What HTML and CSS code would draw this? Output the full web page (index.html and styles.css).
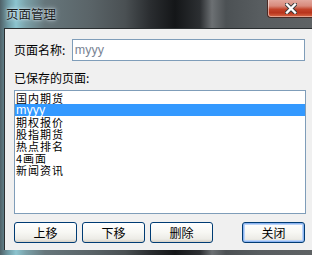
FILE: index.html
```html
<!DOCTYPE html>
<html>
<head>
<meta charset="utf-8">
<link rel="stylesheet" href="styles.css">
</head>
<body>
<div class="window">
  <div class="titlebar">
    <div class="title">页面管理</div>
    <div class="close">
      <svg width="12" height="11" viewBox="0 0 12 11">
        <path d="M2 1.5 L10 9.5 M10 1.5 L2 9.5" stroke="#3a3a3a" stroke-width="4.2" stroke-linecap="square" fill="none"/>
        <path d="M2 1.5 L10 9.5 M10 1.5 L2 9.5" stroke="#ffffff" stroke-width="2.4" stroke-linecap="square" fill="none"/>
      </svg>
    </div>
  </div>
  <div class="client">
    <div class="name-row">
      <span class="label">页面名称:</span>
      <div class="input">myyy</div>
    </div>
    <div class="label saved">已保存的页面:</div>
    <div class="listbox">
      <div class="item">国内期货</div>
      <div class="item selected">myyy</div>
      <div class="item">期权报价</div>
      <div class="item">股指期货</div>
      <div class="item">热点排名</div>
      <div class="item">4画面</div>
      <div class="item">新闻资讯</div>
    </div>
    <div class="buttons">
      <div class="btn">上移</div>
      <div class="btn">下移</div>
      <div class="btn">删除</div>
      <div class="btn default">关闭</div>
    </div>
  </div>
</div>
</body>
</html>
```
FILE: styles.css
```css
html, body {
  margin: 0;
  padding: 0;
}
body {
  width: 312px;
  height: 255px;
  overflow: hidden;
  font-family: "Noto Sans CJK SC", "Liberation Sans", sans-serif;
  font-size: 12px;
  color: #000;
}
.window {
  width: 312px;
  height: 255px;
  background:
    linear-gradient(to right,
      #4f6168 0px, #6f9aa4 8px, #8cc4cf 16px, #7aa0a8 26px, #66767b 45px,
      #5a6468 90px, #4a5053 125px, #2a2d30 150px, #141618 175px,
      #2c2f32 200px, #6c7073 212px, #4c5154 226px, #585d60 260px, #5e6264 312px);
  display: flex;
  flex-direction: column;
}
.titlebar {
  height: 28px;
  display: flex;
  align-items: flex-start;
}
.title {
  padding: 7px 0 0 6px;
  line-height: 14px;
  font-size: 12.5px;
  color: #1a1a1a;
  text-shadow: 0 0 5px rgba(230, 245, 255, 0.9), 0 0 2px rgba(230, 245, 255, 0.8);
}
.close {
  margin-left: auto;
  width: 44px;
  height: 17px;
  border: 1px solid #4a2a24;
  border-top: none;
  border-right: none;
  border-radius: 0 0 0 4px;
  box-shadow: inset 1px 0 0 rgba(255,255,255,0.5), inset 0 -1px 0 rgba(255,255,255,0.4);
  background: linear-gradient(to bottom, #e2a89e 0%, #d88a7c 35%, #c2432a 55%, #b8341c 75%, #d96a48 100%);
  display: flex;
  align-items: center;
  justify-content: center;
}
.close svg {
  margin-left: 2px;
  margin-top: -1px;
}
.client {
  flex: 1;
  margin: 0 0 5px 4px;
  border-left: 1px solid #2a2e30;
  border-top: 1px solid #2a2e30;
  background: #f0f0f0;
  padding: 10px 7px 0 9px;
  display: flex;
  flex-direction: column;
}
.name-row {
  display: flex;
  align-items: center;
  height: 22px;
}
.label {
  line-height: 12px;
  white-space: nowrap;
}
.name-row .label {
  width: 58px;
}
.input {
  width: 230px;
  height: 20px;
  border: 1px solid #7f9db9;
  background: #fff;
  color: #7a8494;
  font-family: "Liberation Sans", "Noto Sans CJK SC", sans-serif;
  font-size: 12.5px;
  line-height: 20px;
  padding-left: 2px;
}
.saved {
  margin-top: 11px;
}
.listbox {
  margin-top: 6px;
  width: 290px;
  height: 121px;
  border: 1px solid #7f9db9;
  background: #fff;
  padding-top: 1px;
  box-sizing: content-box;
}
.item {
  height: 12px;
  line-height: 12px;
  font-size: 11px;
  letter-spacing: 1px;
  padding-left: 1px;
  white-space: nowrap;
}
.item.selected {
  background: #3399ff;
  color: #fff;
  font-family: "Liberation Sans", "Noto Sans CJK SC", sans-serif;
  font-size: 12.5px;
  letter-spacing: 0;
}
.buttons {
  margin-top: 8px;
  display: flex;
  gap: 5px;
}
.btn {
  width: 61px;
  height: 19px;
  border: 1px solid #003c74;
  border-radius: 3px;
  background: linear-gradient(to bottom, #ffffff 0%, #f7f7f3 50%, #ecebe6 85%, #d6d0c5 100%);
  display: flex;
  align-items: center;
  justify-content: center;
  line-height: 12px;
}
.btn.default {
  margin-left: auto;
  box-shadow: inset 0 0 0 1px #8cb4f2, inset 0 0 0 2px #bcd4f6;
}
```
